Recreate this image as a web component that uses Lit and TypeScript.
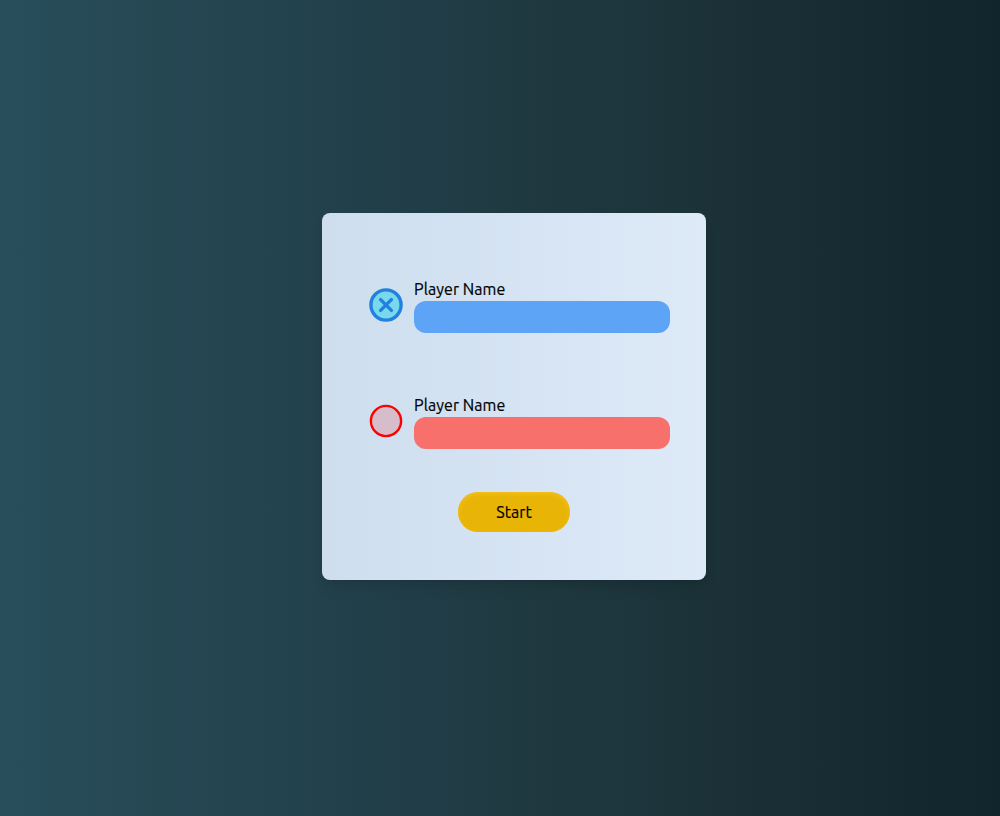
import { LitElement, html, css } from "lit";
import { customElement } from "lit/decorators.js";

@customElement("app-root")
export class AppRoot extends LitElement {
  static styles = css`
    :host { display: flex; box-sizing: border-box; width: 100%; height: 100vh; padding: 213px 0 0 322px;
      align-items: flex-start;
      background: linear-gradient(90deg, #284e5b 0%, #213e48 40%, #203a42 50%, #1a3036 75%, #11252c 100%);
      font: 400 16px/24px Ubuntu, "Noto Sans", sans-serif; color: #000; }
    .card { box-sizing: border-box; width: 384px; height: 367px; padding: 64px 36px 48px 48px; border-radius: 8px;
      background: linear-gradient(90deg, #cedeed, #d6e4f4 55%, #deeaf7);
      box-shadow: 0 10px 15px -3px rgba(0,0,0,.1), 0 4px 6px -4px rgba(0,0,0,.1); }
    .row { display: flex; height: 56px; margin-bottom: 60px; gap: 12px; }
    .row svg { width: 32px; height: 32px; margin-top: 12px; overflow: visible; flex: none; }
    label { display: block; width: 256px; }
    .name { display: block; height: 24px; line-height: 24px; letter-spacing: .08px; -webkit-text-stroke: .2px #000; }
    input { display: block; box-sizing: border-box; width: 256px; height: 32px; border: 0; border-radius: 12px; padding: 0 8px; outline: 0; font: inherit; }
    .blue { background: #5ea4f6; }
    .red { background: #f7706c; }
    .row.last { margin-bottom: 43px; }
    button { display: block; margin-left: 88px; width: 112px; height: 40px; border: 0; border-radius: 20px; padding: 0;
      font: inherit; letter-spacing: .08px; -webkit-text-stroke: .2px #000; color: #000; background: #e8b406; box-shadow: inset 0 2px 4px #f5c022; }
  `;

  render() {
    return html`<form class="card">
      <div class="row">
        <svg viewBox="0 0 32 32"><circle cx="16" cy="16" r="15.1" fill="#78d9ec" stroke="#2380e0" stroke-width="3.4"/><path d="M10.6 10.6l10.8 10.8M21.4 10.6L10.6 21.4" stroke="#2380e0" stroke-width="3.4" stroke-linecap="round"/></svg>
        <label><span class="name">Player Name</span><input class="blue"></label>
      </div>
      <div class="row last">
        <svg viewBox="0 0 32 32"><circle cx="16" cy="16" r="15.1" fill="#d7bdca" stroke="#f00" stroke-width="2.4"/></svg>
        <label><span class="name">Player Name</span><input class="red"></label>
      </div>
      <button type="button">Start</button>
    </form>`;
  }
}
